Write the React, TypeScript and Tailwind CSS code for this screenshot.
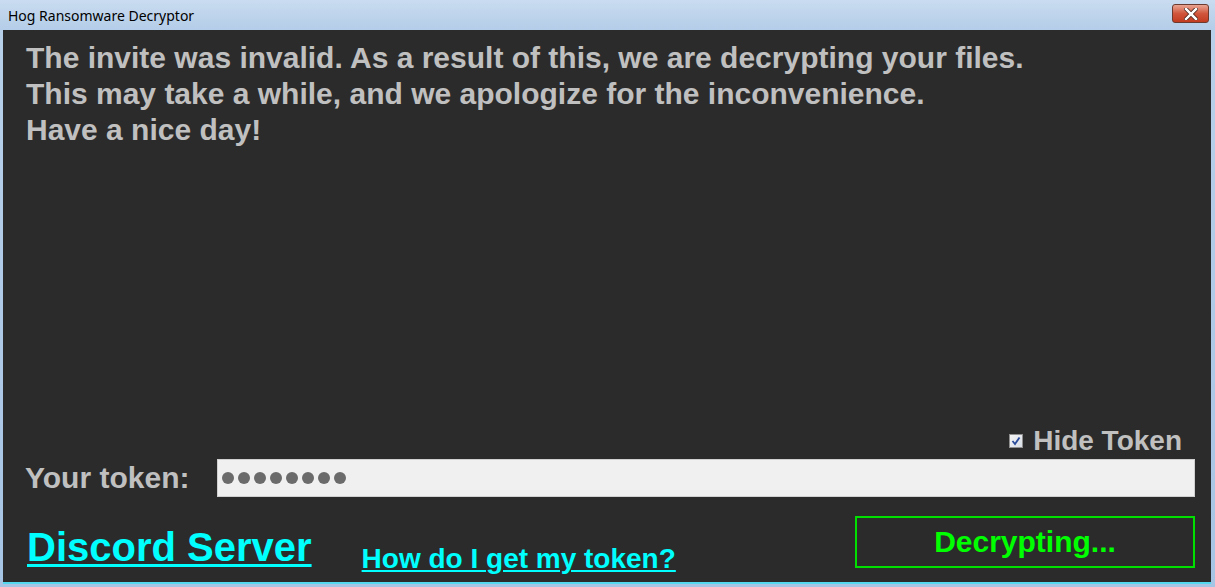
import React from 'react';

const dots = Array.from({ length: 8 });

export default function App() {
  return (
    <div className="w-[1215px] h-[587px] flex flex-col bg-gradient-to-b from-[#b9d1ea] to-[#a6c4e4] overflow-hidden">
      {/* Title bar */}
      <div className="h-[30px] flex items-center justify-between pl-[8px] pr-[6px] bg-gradient-to-b from-[#c9dcf0] to-[#b4cde8]">
        <span className="text-[14px] text-black" style={{ fontFamily: '"Noto Sans", "Open Sans", sans-serif' }}>
          Hog Ransomware Decryptor
        </span>
        <button className="w-[37px] h-[19px] -mt-[3px] rounded-[3px] border border-[#6d3a2f] bg-gradient-to-b from-[#e8a493] via-[#d0563c] to-[#c23b20] flex items-center justify-center">
          <svg width="14" height="12" viewBox="0 0 14 12">
            <path d="M2 1 L12 11 M12 1 L2 11" stroke="#3a1a12" strokeWidth="4" strokeLinecap="square" />
            <path d="M2 1 L12 11 M12 1 L2 11" stroke="#ffffff" strokeWidth="2.5" strokeLinecap="square" />
          </svg>
        </button>
      </div>

      {/* Client area */}
      <div
        className="flex-1 ml-[3px] mr-[4px] mb-[3px] bg-[#2b2b2b] flex flex-col border-b-[2px] border-[#53d8f0]"
        style={{ fontFamily: '"Liberation Sans", Arial, sans-serif' }}
      >
        <div className="pt-[10px] pl-[23px] text-[30px] leading-[36px] font-bold text-[#c0c0c0]">
          <p>The invite was invalid. As a result of this, we are decrypting your files.</p>
          <p>This may take a while, and we apologize for the inconvenience.</p>
          <p>Have a nice day!</p>
        </div>

        <div className="mt-auto flex flex-col">
          {/* Hide token */}
          <div className="h-[28px] mt-[2px] flex items-center justify-end pr-[29px] gap-[10px]">
            <div className="w-[14px] h-[14px] bg-gradient-to-br from-[#f4f4f4] to-[#d8dde6] border border-[#8f8f8f] flex items-center justify-center">
              <svg width="10" height="10" viewBox="0 0 10 10">
                <path d="M1.5 5 L4 8 L8.5 1.5" fill="none" stroke="#2a4a9a" strokeWidth="1.8" />
              </svg>
            </div>
            <span className="text-[28px] font-bold text-[#c0c0c0] leading-none">Hide Token</span>
          </div>

          {/* Token row */}
          <div className="mt-[4px] h-[38px] flex items-center pl-[22px] pr-[16px]">
            <span className="w-[192px] text-[30px] font-bold text-[#c0c0c0] leading-none">Your token:</span>
            <div className="flex-1 h-full bg-[#f0f0f0] border border-[#d0d0d0] flex items-center pl-[4px] gap-[4px]">
              {dots.map((_, i) => (
                <span key={i} className="w-[12px] h-[12px] rounded-full bg-[#6b6b6b]" />
              ))}
            </div>
          </div>

          {/* Bottom row */}
          <div className="mt-[19px] h-[53px] flex items-start pl-[24px] pr-[16px] pb-[13px] box-content">
            <a className="mt-[11px] text-[40px] leading-[40px] font-bold text-[#00ffff] underline decoration-[3px] underline-offset-[3px]">
              Discord Server
            </a>
            <a className="ml-[50px] mt-[27px] text-[28px] leading-[32px] font-bold text-[#00ffff] underline decoration-[2px] underline-offset-[2px]">
              How do I get my token?
            </a>
            <div className="ml-auto w-[340px] h-[52px] border-[2px] border-[#00e000] flex items-center justify-center">
              <span className="text-[30px] font-bold text-[#00ff00] leading-none">Decrypting...</span>
            </div>
          </div>
        </div>
      </div>
    </div>
  );
}
